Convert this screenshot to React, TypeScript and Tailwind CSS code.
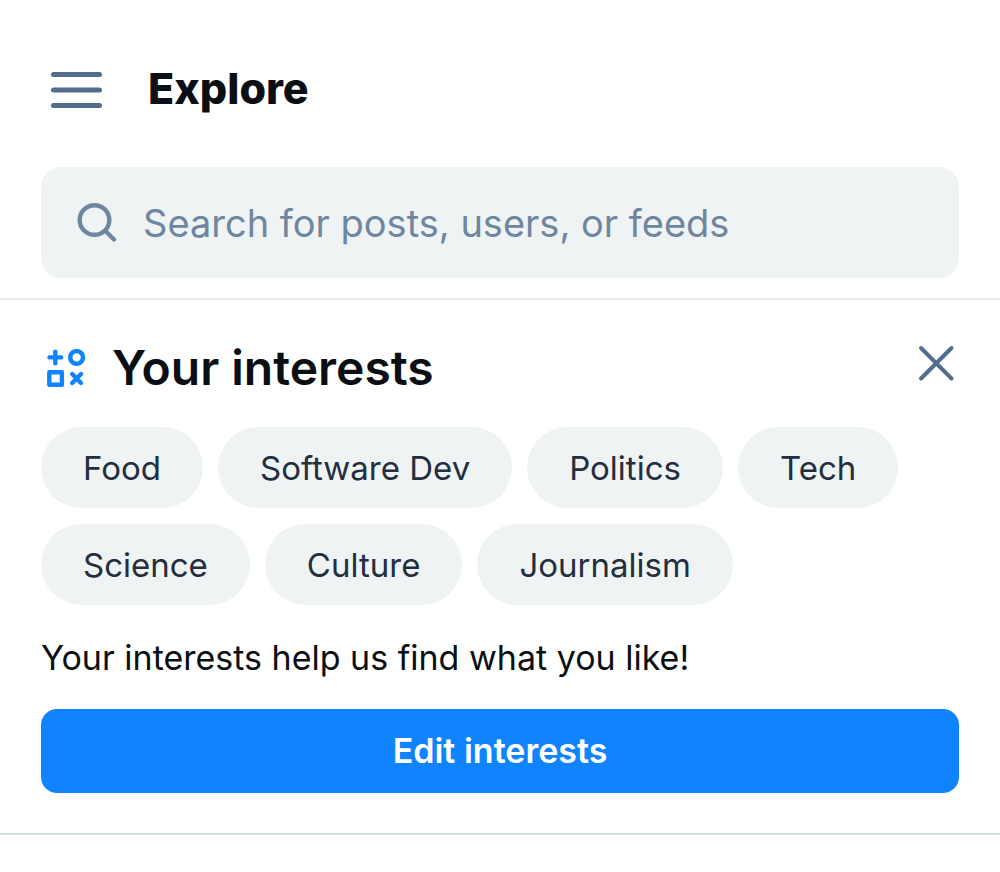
const interests = ['Food', 'Software Dev', 'Politics', 'Tech', 'Science', 'Culture', 'Journalism'];

const MenuIcon = () => (
  <svg width="52" height="38" viewBox="0 0 52 38" fill="none" stroke="#526E8E" strokeWidth="5" strokeLinecap="round" aria-hidden="true">
    <path d="M2.5 3.5h46M2.5 19h46M2.5 34.5h46" />
  </svg>
);

const SearchIcon = () => (
  <svg width="40" height="40" viewBox="0 0 40 40" fill="none" stroke="#6F869F" strokeWidth="4.4" strokeLinecap="round" aria-hidden="true">
    <circle cx="17.5" cy="17" r="14.8" />
    <path d="M28.2 27.8l8.8 8.7" />
  </svg>
);

const ShapesIcon = () => (
  <svg width="42" height="42" viewBox="0 0 42 42" fill="none" stroke="#1083FE" strokeWidth="4.4" strokeLinecap="round" strokeLinejoin="round" aria-hidden="true">
    <path d="M10.3 4.6v11.6M4.5 10.4h11.6" />
    <circle cx="31.6" cy="10.4" r="6.4" />
    <path d="M4.3 25.2h12.6v12.6H4.3z" />
    <path d="M27.2 27l8.8 9M36 27l-8.8 9" />
  </svg>
);

const CloseIcon = () => (
  <svg width="38" height="38" viewBox="0 0 38 38" fill="none" stroke="#526E8E" strokeWidth="4" strokeLinecap="round" aria-hidden="true">
    <path d="M4 3l30.5 30.5M34.5 3L4 33.5" />
  </svg>
);

const Header = () => (
  <header className="border-b-2 border-[#E6E9EC] px-[41px] pt-[52px] pb-5">
    <div className="flex h-[76px] items-center gap-[45px] pl-[10px]">
      <button type="button" aria-label="Open menu">
        <MenuIcon />
      </button>
      <h1 className="pb-1 text-[43px] leading-[52px] font-extrabold">Explore</h1>
    </div>
    <label className="mt-[39px] flex h-[111px] items-center gap-[26px] rounded-[20px] bg-[#EFF3F4] px-9">
      <SearchIcon />
      <input
        type="search"
        aria-label="Search"
        placeholder="Search for posts, users, or feeds"
        className="min-w-0 flex-1 bg-transparent text-[38px] leading-[52px] outline-none placeholder:text-[#6F869F]"
      />
    </label>
  </header>
);

const Interests = () => (
  <section className="border-b-2 border-[#D4DFE4] px-[41px] pt-[38px] pb-10">
    <div className="flex items-start justify-between">
      <div className="flex items-center gap-[25px] pl-1">
        <ShapesIcon />
        <h2 className="text-[48px] leading-[60px] font-semibold">Your interests</h2>
      </div>
      <button type="button" aria-label="Dismiss" className="mt-[7px] mr-1">
        <CloseIcon />
      </button>
    </div>
    <ul className="mt-[29px] flex flex-wrap gap-x-[15px] gap-y-4">
      {interests.map(interest => (
        <li key={interest} className="flex h-[81px] items-center rounded-full bg-[#EFF3F4] px-[42px] text-[33px] leading-[44px] text-[#232E3E]">
          {interest}
        </li>
      ))}
    </ul>
    <p className="mt-[31px] text-[34px] leading-[44px]">Your interests help us find what you like!</p>
    <button type="button" className="mt-[29px] h-[84px] w-full rounded-[16px] bg-[#1083FE] text-[34px] leading-[44px] font-semibold text-white">
      Edit interests
    </button>
  </section>
);

const App = () => (
  <main className="min-h-screen bg-white font-[Inter,sans-serif] text-[#0B0F14]">
    <Header />
    <Interests />
  </main>
);

export default App;
